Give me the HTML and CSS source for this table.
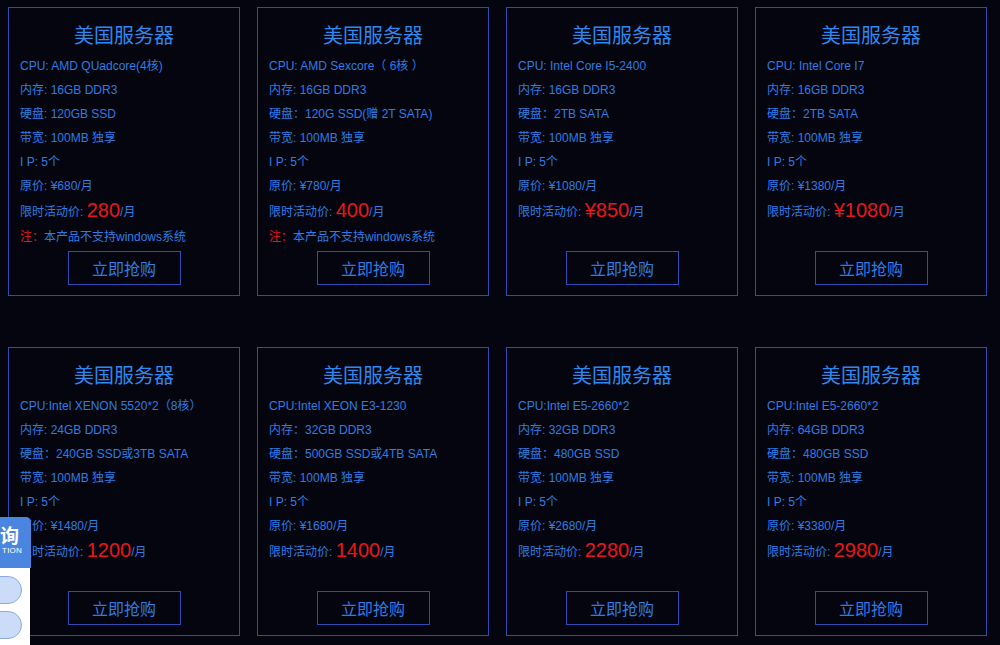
FILE: index.html
```html
<!DOCTYPE html>
<html lang="zh-CN">
<head>
<meta charset="utf-8">
<title>美国服务器</title>
<link rel="stylesheet" href="styles.css">
</head>
<body>
<div class="grid">
  <div class="card">
    <h3 class="title">美国服务器</h3>
    <p class="line">CPU: AMD QUadcore(4核)</p>
    <p class="line">内存: 16GB DDR3</p>
    <p class="line">硬盘: 120GB SSD</p>
    <p class="line">带宽: 100MB 独享</p>
    <p class="line">I P: 5个</p>
    <p class="line">原价: ¥680/月</p>
    <p class="line price">限时活动价: <span class="big">280</span>/月</p>
    <p class="line"><span class="red">注：</span>本产品不支持windows系统</p>
    <a class="buy">立即抢购</a>
  </div>
  <div class="card">
    <h3 class="title">美国服务器</h3>
    <p class="line">CPU: AMD Sexcore（ 6核 ）</p>
    <p class="line">内存: 16GB DDR3</p>
    <p class="line">硬盘：120G SSD(赠 2T SATA)</p>
    <p class="line">带宽: 100MB 独享</p>
    <p class="line">I P: 5个</p>
    <p class="line">原价: ¥780/月</p>
    <p class="line price">限时活动价: <span class="big">400</span>/月</p>
    <p class="line"><span class="red">注：</span>本产品不支持windows系统</p>
    <a class="buy">立即抢购</a>
  </div>
  <div class="card">
    <h3 class="title">美国服务器</h3>
    <p class="line">CPU: Intel Core I5-2400</p>
    <p class="line">内存: 16GB DDR3</p>
    <p class="line">硬盘：2TB SATA</p>
    <p class="line">带宽: 100MB 独享</p>
    <p class="line">I P: 5个</p>
    <p class="line">原价: ¥1080/月</p>
    <p class="line price">限时活动价: <span class="big">¥850</span>/月</p>
    <a class="buy">立即抢购</a>
  </div>
  <div class="card">
    <h3 class="title">美国服务器</h3>
    <p class="line">CPU: Intel Core I7</p>
    <p class="line">内存: 16GB DDR3</p>
    <p class="line">硬盘：2TB SATA</p>
    <p class="line">带宽: 100MB 独享</p>
    <p class="line">I P: 5个</p>
    <p class="line">原价: ¥1380/月</p>
    <p class="line price">限时活动价: <span class="big">¥1080</span>/月</p>
    <a class="buy">立即抢购</a>
  </div>
  <div class="card">
    <h3 class="title">美国服务器</h3>
    <p class="line">CPU:Intel XENON 5520*2（8核）</p>
    <p class="line">内存: 24GB DDR3</p>
    <p class="line">硬盘：240GB SSD或3TB SATA</p>
    <p class="line">带宽: 100MB 独享</p>
    <p class="line">I P: 5个</p>
    <p class="line">原价: ¥1480/月</p>
    <p class="line price">限时活动价: <span class="big">1200</span>/月</p>
    <a class="buy">立即抢购</a>
  </div>
  <div class="card">
    <h3 class="title">美国服务器</h3>
    <p class="line">CPU:Intel XEON E3-1230</p>
    <p class="line">内存：32GB DDR3</p>
    <p class="line">硬盘：500GB SSD或4TB SATA</p>
    <p class="line">带宽: 100MB 独享</p>
    <p class="line">I P: 5个</p>
    <p class="line">原价: ¥1680/月</p>
    <p class="line price">限时活动价: <span class="big">1400</span>/月</p>
    <a class="buy">立即抢购</a>
  </div>
  <div class="card">
    <h3 class="title">美国服务器</h3>
    <p class="line">CPU:Intel E5-2660*2</p>
    <p class="line">内存: 32GB DDR3</p>
    <p class="line">硬盘：480GB SSD</p>
    <p class="line">带宽: 100MB 独享</p>
    <p class="line">I P: 5个</p>
    <p class="line">原价: ¥2680/月</p>
    <p class="line price">限时活动价: <span class="big">2280</span>/月</p>
    <a class="buy">立即抢购</a>
  </div>
  <div class="card">
    <h3 class="title">美国服务器</h3>
    <p class="line">CPU:Intel E5-2660*2</p>
    <p class="line">内存: 64GB DDR3</p>
    <p class="line">硬盘：480GB SSD</p>
    <p class="line">带宽: 100MB 独享</p>
    <p class="line">I P: 5个</p>
    <p class="line">原价: ¥3380/月</p>
    <p class="line price">限时活动价: <span class="big">2980</span>/月</p>
    <a class="buy">立即抢购</a>
  </div>
</div>

<div class="consult">
  <div class="consult-head">
    <div class="consult-cn">询</div>
    <div class="consult-en">TION</div>
  </div>
  <div class="consult-body">
    <span class="pill"></span>
    <span class="pill"></span>
  </div>
</div>
</body>
</html>
```

FILE: styles.css
```css
html, body {
  margin: 0;
  padding: 0;
  background: #05050f;
}
body {
  font-family: "Liberation Sans", "Noto Sans CJK SC", Arial, sans-serif;
  color: #2b7de3;
  overflow: hidden;
}
.grid {
  display: grid;
  grid-template-columns: repeat(4, 232px);
  column-gap: 17px;
  row-gap: 51px;
  padding: 7px 8px;
}
.card {
  box-sizing: border-box;
  height: 289px;
  border: 1px solid #2c4cb3;
  padding: 15px 11px 10px;
  display: flex;
  flex-direction: column;
}
.title {
  margin: 0 0 7px;
  text-align: center;
  font-family: "Noto Sans CJK SC", sans-serif;
  font-weight: normal;
  font-size: 20px;
  line-height: 24px;
  color: #2d88ef;
}
.line {
  margin: 0;
  font-size: 12px;
  line-height: 24px;
  white-space: nowrap;
}
.line.price {
  line-height: 25px;
}
.big {
  font-size: 20px;
  color: #e8161c;
  vertical-align: -1px;
}
.red {
  color: #e8161c;
}
.buy {
  align-self: center;
  margin-top: auto;
  box-sizing: border-box;
  width: 113px;
  height: 34px;
  border: 1px solid #2c4cb3;
  display: flex;
  align-items: center;
  justify-content: center;
  font-family: "Noto Sans CJK SC", sans-serif;
  font-size: 16px;
  color: #2b7de3;
  cursor: pointer;
}
.consult {
  position: fixed;
  left: 0;
  top: 517px;
  width: 31px;
}
.consult-head {
  height: 51px;
  background: #4a86df;
  border-top-right-radius: 5px;
  color: #fff;
  text-align: right;
  overflow: hidden;
  box-sizing: border-box;
  padding-top: 7px;
}
.consult-cn {
  font-family: "Noto Sans CJK SC", sans-serif;
  font-weight: bold;
  font-size: 19px;
  line-height: 22px;
  padding-right: 13px;
}
.consult-en {
  font-size: 8px;
  line-height: 10px;
  padding-right: 9px;
  letter-spacing: 0.2px;
}
.consult-body {
  width: 30px;
  height: 80px;
  background: #fff;
  display: flex;
  flex-direction: column;
  gap: 7px;
  padding-top: 8px;
  box-sizing: border-box;
}
.pill {
  display: block;
  width: 40px;
  height: 28px;
  margin-left: -18px;
  box-sizing: border-box;
  border: 1px solid #8eaae2;
  border-radius: 14px;
  background: #cbdcf8;
}
```
